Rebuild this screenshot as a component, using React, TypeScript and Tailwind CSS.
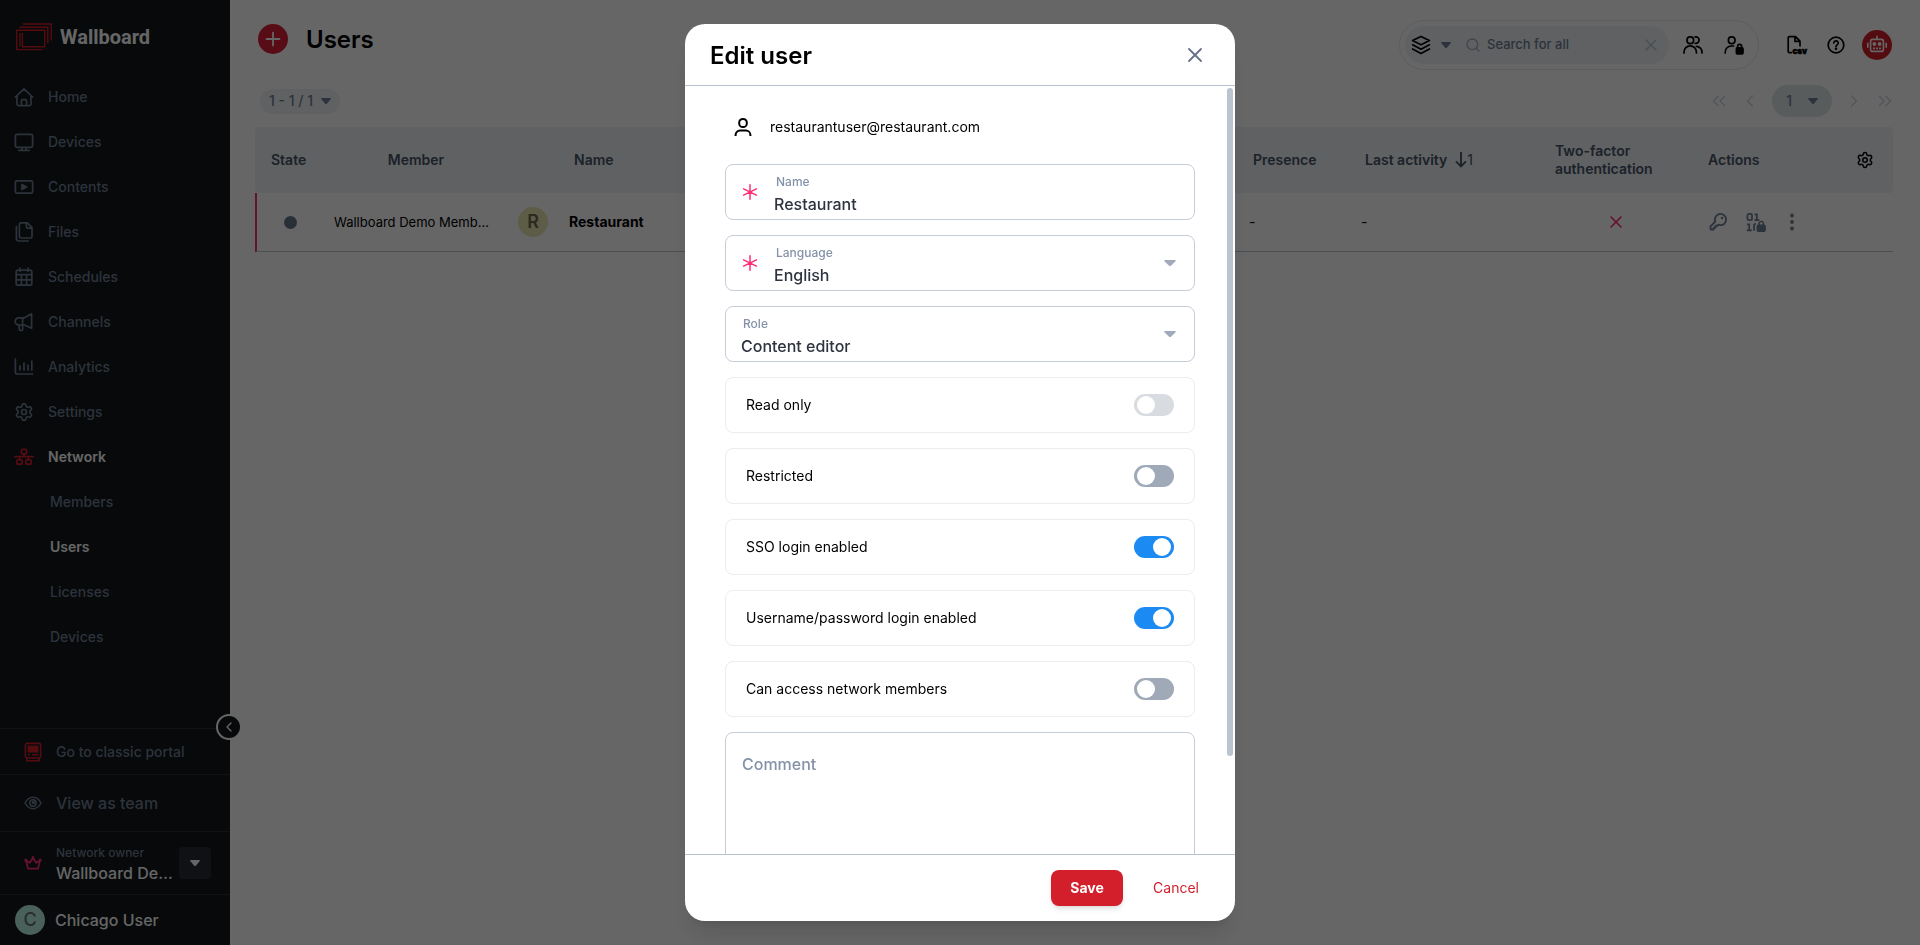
import type { ReactNode } from "react";
import { ChevronLeft, ChevronRight, ChevronsLeft, ChevronsRight, Plus, Search, Settings, X } from "lucide-react";
import { PiKeyBold } from "react-icons/pi";

type IconProps = { className?: string; children?: ReactNode };

const Line = ({ className = "size-5", children }: IconProps) => (
  <svg
    viewBox="0 0 20 20"
    className={`${className} overflow-visible`}
    fill="none"
    stroke="currentColor"
    strokeWidth="1.7"
    strokeLinecap="round"
    strokeLinejoin="round"
    aria-hidden="true"
  >
    {children}
  </svg>
);

const HomeIcon = () => (
  <Line>
    <path d="M1.4 10 10 1.8 18.6 10M3 9v8a1.6 1.6 0 0 0 1.6 1.6h10.8A1.6 1.6 0 0 0 17 17V9M7.4 18.4v-4.2a1.6 1.6 0 0 1 1.6-1.6h2a1.6 1.6 0 0 1 1.6 1.6v4.2" />
  </Line>
);
const DeviceIcon = () => (
  <Line>
    <rect x="1.4" y="2.4" width="17.2" height="13" rx="1.6" />
    <path d="M8 15.6v2.6M12 15.6v2.6M5 18.4h10" />
  </Line>
);
const ContentIcon = () => (
  <Line>
    <rect x="1.4" y="3.8" width="17.2" height="12.4" rx="1.4" />
    <path d="M8 7.4v5.2l4.6-2.6z" fill="currentColor" />
  </Line>
);
const FilesIcon = () => (
  <Line>
    <path d="M7 .9h6.4L18 5.6v8.8a1.6 1.6 0 0 1-1.6 1.6H7a1.6 1.6 0 0 1-1.6-1.6v-12A1.6 1.6 0 0 1 7 .9zM12.4 1.2v3.6a1.4 1.4 0 0 0 1.4 1.4h3.8M2.4 4.4v12.2a2.4 2.4 0 0 0 2.4 2.4h9.4" />
  </Line>
);
const CalendarIcon = () => (
  <Line>
    <rect x="2.2" y="3.2" width="15.6" height="15" rx="1.8" />
    <path d="M2.4 7.6h15.2M6 1.2v3M14 1.2v3M2.4 12.8h15.2M7.4 7.8V18M12.6 7.8V18" />
  </Line>
);
const MegaphoneIcon = () => (
  <Line>
    <path d="M17.6 1.8v14.4L10.4 13H4.6a3.4 3.4 0 0 1-3.4-3.6 3.4 3.4 0 0 1 3.4-3.6h5.8zM8.6 6v6.8M5 13.2l.4 4.4a1 1 0 0 0 1 .9h1.2a1 1 0 0 0 1-1v-4.3" />
  </Line>
);
const ChartIcon = () => (
  <Line>
    <path d="M1.4 2v13.2a1.8 1.8 0 0 0 1.8 1.8h15.4M6 9v4M10 6v7M14 8v5M17.8 4v9" />
  </Line>
);
const NetworkIcon = () => (
  <Line>
    <path d="M.6 9.6h18.8M10 7v2.6M5.6 9.8v2.8M14.4 9.8v2.8" />
    <rect x="7.4" y="2.4" width="5.2" height="4.4" rx="1" />
    <rect x="2.8" y="12.8" width="5.4" height="4.4" rx="1" />
    <rect x="11.8" y="12.8" width="5.4" height="4.4" rx="1" />
  </Line>
);
const UserIcon = () => (
  <svg viewBox="0 0 18 20" className="h-5 w-[18px]" fill="none" stroke="currentColor" strokeWidth="2" aria-hidden="true">
    <rect x="5.2" y="2" width="7.6" height="8" rx="3.6" />
    <path d="M1.6 19v-1a4.4 4.4 0 0 1 4.4-4.4h6a4.4 4.4 0 0 1 4.4 4.4v1" />
  </svg>
);
const UsersIcon = () => (
  <Line>
    <rect x="4" y="1.8" width="6.600" height="6.800" rx="3.2" />
    <path d="M1 18v-1a6.200 6.200 0 0 1 12.400 0v1M12 1.800h.8a3.200 3.200 0 0 1 0 6.600h-.6M13.400 11.400a5.800 5.800 0 0 1 5.600 5.800v.8" />
  </Line>
);
const UserLockIcon = () => (
  <Line>
    <rect x="4.4" y="1.8" width="6.600" height="6.800" rx="3.2" />
    <path d="M1.200 18v-1a6 6 0 0 1 6-6h2.400M13.600 13v-1.600a2 2 0 0 1 4 0V13" />
    <rect x="12.400" y="12.800" width="6.600" height="6" rx="1" fill="currentColor" />
  </Line>
);
const LayersIcon = () => (
  <Line>
    <path d="m10 1.400 8.400 4.200L10 9.800 1.600 5.600zM1.600 9.800l8.400 4.400 8.400-4.400M1.600 14l8.400 4.400 8.400-4.400" />
  </Line>
);
const CsvIcon = () => (
  <Line>
    <path d="M5.400 17.600h-2a1.200 1.200 0 0 1-1.200-1.200V2.800a1.200 1.200 0 0 1 1.200-1.200h6L14 6.200v4.600M9 1.800v4.600h4.800" />
    <text x="6.400" y="18.800" className="text-[8px] font-black" fill="currentColor" strokeWidth="0.600">
      csv
    </text>
  </Line>
);
const HelpIcon = () => (
  <Line>
    <circle cx="10" cy="10" r="7.800" />
    <path d="M7.800 8a2.200 2.200 0 1 1 3.200 2c-.7.400-1 .7-1 1.400" />
    <circle cx="10" cy="13.800" r=".5" fill="currentColor" />
  </Line>
);
const RobotIcon = () => (
  <svg viewBox="0 0 24 24" className="size-6" fill="none" stroke="currentColor" strokeWidth="1.6" aria-hidden="true">
    <rect x="5.600" y="6.400" width="12.800" height="12" rx="2" />
    <path d="M12 6V2.800M2.800 9.800v5M21.200 9.800v5" />
    <path d="M8 15.400h2M11 15.400h2M14 15.400h2" />
    <circle cx="9.400" cy="11" r="1.100" fill="currentColor" />
    <circle cx="14.600" cy="11" r="1.100" fill="currentColor" />
  </svg>
);
const BinaryLockIcon = () => (
  <svg viewBox="0 0 20 20" className="size-5" fill="none" stroke="currentColor" strokeWidth="1.800" aria-hidden="true">
    <rect x="1.400" y="1.900" width="4.600" height="6.200" rx="1.600" />
    <path d="M8.600 2.400h2.200v6M8.400 8.200h5M1 12.400h2.200v6M.8 18.400h5M10 11.800h-.4a1.600 1.600 0 0 0-1.600 1.600v5.400" />
    <rect x="11.400" y="13.400" width="7.600" height="5.600" rx="1" fill="currentColor" />
    <path d="M13 13v-1.400a2.200 2.200 0 0 1 4.400 0V13" strokeWidth="1.500" />
  </svg>
);
const ClassicIcon = () => (
  <svg viewBox="0 0 18 20" className="h-5 w-[18px]" fill="none" stroke="currentColor" strokeWidth="1.600" aria-hidden="true">
    <rect x="1.400" y="1.400" width="15.200" height="14.600" rx="1.600" />
    <rect x="4.400" y="4.400" width="9.200" height="5.400" fill="currentColor" />
    <path d="M4 12.800h2M8 12.800h6.400M2.800 16v2.800h12.400V16" />
  </svg>
);
const EyeIcon = () => (
  <svg viewBox="0 0 18 18" className="size-[18px]" fill="none" stroke="currentColor" strokeWidth="1.500" aria-hidden="true">
    <path d="M1 9c2-3.800 4.800-5.700 8-5.700S15 5.200 17 9c-2 3.800-4.800 5.700-8 5.700S3 12.800 1 9z" />
    <circle cx="9" cy="9" r="3.200" />
    <circle cx="9.400" cy="8.600" r="1" />
  </svg>
);
const CrownIcon = () => (
  <svg viewBox="0 0 18 18" className="size-[18px]" fill="none" stroke="currentColor" strokeWidth="1.800" strokeLinejoin="round" aria-hidden="true">
    <path d="M4 14.600h10l2-8-3.800 2.200L9 4 5.800 8.800 2 6.600z" />
    <circle cx="1.800" cy="6" r=".6" />
    <circle cx="9" cy="3.600" r=".6" />
    <circle cx="16.200" cy="6" r=".6" />
  </svg>
);
const Logo = () => (
  <svg viewBox="0 0 36 28" className="h-7 w-9" fill="none" stroke="currentColor" strokeWidth="1.400" aria-hidden="true">
    <path d="M26.300 26.600H.7V7.200h28v16.600H6.400V10M3.600 4.200h28.200v16M6.800 1h28.400v16.400M4 10v13.600" />
  </svg>
);
const Caret = ({ className = "w-2.5" }: IconProps) => (
  <svg viewBox="0 0 10 6" className={`h-1.5 ${className}`} preserveAspectRatio="none" fill="currentColor" aria-hidden="true">
    <path d="M1 0h8q1.300.3.600 1.300L6 5.400q-1 1-2 0L.4 1.300Q-.3.300 1 0z" />
  </svg>
);
const Asterisk = () => (
  <svg viewBox="0 0 16 16" className="size-4 text-[#ff2e74]" stroke="currentColor" strokeWidth="1.500" strokeLinecap="round" aria-hidden="true">
    <path d="M8 .8v14.400M1.600 4.800l12.800 6.400M14.400 4.800 1.600 11.200" />
  </svg>
);
const SortIcon = () => (
  <svg viewBox="0 0 12 16" className="h-4 w-3" fill="none" stroke="currentColor" strokeWidth="1.900" aria-hidden="true">
    <path d="M6 0v14.400M1 9.400l5 5 5-5" />
  </svg>
);
const DotsIcon = () => (
  <svg viewBox="0 0 4 18" className="h-[18px] w-1" fill="currentColor" aria-hidden="true">
    <circle cx="2" cy="2.500" r="1.900" />
    <circle cx="2" cy="9" r="1.900" />
    <circle cx="2" cy="15.500" r="1.900" />
  </svg>
);

const nav = [
  { label: "Home", icon: <HomeIcon /> },
  { label: "Devices", icon: <DeviceIcon /> },
  { label: "Contents", icon: <ContentIcon /> },
  { label: "Files", icon: <FilesIcon /> },
  { label: "Schedules", icon: <CalendarIcon /> },
  { label: "Channels", icon: <MegaphoneIcon /> },
  { label: "Analytics", icon: <ChartIcon /> },
  { label: "Settings", icon: <Settings className="size-5" /> },
];
const networkNav = ["Members", "Users", "Licenses", "Devices"];

function Sidebar() {
  return (
    <aside className="flex w-[230px] shrink-0 flex-col bg-[#12171a] text-sm font-medium text-[#718096]">
      <div className="flex h-[74px] items-center gap-2 px-4">
        <span className="text-[#d21f2b]"><Logo /></span>
        <span className="font-['Roboto',sans-serif] text-xl leading-6 font-bold text-white">Wallboard</span>
      </div>
      <nav className="flex flex-1 flex-col">
        {nav.map((item) => (
          <a key={item.label} href="#" className="flex h-[45px] items-center gap-3.5 px-3.5">
            {item.icon}
            {item.label}
          </a>
        ))}
        <a href="#" className="flex h-[45px] items-center gap-3.5 px-3.5 font-semibold text-white">
          <span className="text-[#d21f2b]"><NetworkIcon /></span>
          Network
        </a>
        {networkNav.map((label) => (
          <a
            key={label}
            href="#"
            className={label === "Users" ? "flex h-[45px] items-center pl-[50px] font-semibold text-white" : "flex h-[45px] items-center pl-[50px]"}
          >
            {label}
          </a>
        ))}
      </nav>
      <div className="relative">
        <button
          aria-label="Collapse menu"
          className="absolute -top-3.5 -right-3 flex size-[26px] items-center justify-center rounded-full border-2 border-white bg-[#12171a] text-white"
        >
          <ChevronLeft className="size-4" />
        </button>
        <a href="#" className="flex h-[46px] items-center gap-3.5 border-t border-[#282d36] px-6">
          <span className="text-[#d21f2b]"><ClassicIcon /></span>
          Go to classic portal
        </a>
        <a href="#" className="flex h-[57px] items-center gap-3.5 border-t border-[#282d36] px-6 text-base">
          <EyeIcon />
          View as team
        </a>
        <div className="flex h-[63px] items-center border-t border-[#282d36] pr-[19px] pl-6">
          <span className="mr-3.5 text-[#ff2e74]"><CrownIcon /></span>
          <div className="min-w-0 flex-1">
            <p className="text-xs leading-5">Network owner</p>
            <p className="truncate text-base leading-5 text-white">Wallboard Demo</p>
          </div>
          <button aria-label="Switch network" className="ml-1 flex size-8 shrink-0 items-center justify-center rounded bg-[#282b35] text-white">
            <Caret />
          </button>
        </div>
        <div className="flex h-[51px] items-center gap-2.5 border-t border-[#282d36] px-[15px]">
          <span className="flex size-[30px] items-center justify-center rounded-full bg-[#b8f0e2] text-lg text-[#5f7370]">C</span>
          <span className="text-base text-white">Chicago User</span>
        </div>
      </div>
    </aside>
  );
}

function TopBar() {
  return (
    <header className="flex items-start justify-between px-7 pt-5">
      <div className="flex items-center gap-[18px] pt-[3px]">
        <button aria-label="Add user" className="flex size-[30px] items-center justify-center rounded-full bg-[#dc2036] text-white">
          <Plus className="size-[22px]" />
        </button>
        <h1 className="pt-0.5 text-2xl leading-[30px] font-semibold text-black">Users</h1>
      </div>
      <div className="flex items-center text-black">
        <div className="mr-[27px] flex h-[50px] items-center rounded-full border border-[#e2e8f0] pr-3.5 pl-[5px]">
          <div className="mr-3.5 flex h-[38px] w-[264px] items-center rounded-full bg-[#edf2f7] pr-2 pl-1.5 text-[#718096]">
            <button aria-label="Filter" className="flex items-center gap-2.5">
              <span className="text-black"><LayersIcon /></span>
              <Caret />
            </button>
            <Search className="ml-3.5 size-4 shrink-0 text-[#a0aec0]" />
            <input
              aria-label="Search"
              placeholder="Search for all"
              className="ml-1.5 w-full min-w-0 bg-transparent text-[13px] font-medium outline-none placeholder:text-[#718096]"
            />
            <button aria-label="Clear search"><X className="size-5 text-[#b9c4d2]" strokeWidth={1.6} /></button>
          </div>
          <button aria-label="All users" className="mr-[21px]"><UsersIcon /></button>
          <button aria-label="Locked users"><UserLockIcon /></button>
        </div>
        <button aria-label="Export CSV" className="mr-5"><CsvIcon /></button>
        <button aria-label="Help" className="mr-4"><HelpIcon /></button>
        <button aria-label="Assistant" className="flex size-[30px] items-center justify-center rounded-full bg-[#d21f2b] text-white">
          <RobotIcon />
        </button>
      </div>
    </header>
  );
}

function Pager() {
  return (
    <div className="flex h-8 items-center justify-between pr-7 pl-[30px] text-sm font-medium text-[#718096]">
      <button className="flex h-[25px] items-center gap-2 rounded-full bg-[#edf2f7] px-[9px]">
        1 - 1 / 1 <Caret />
      </button>
      <div className="flex items-center text-[#cbd5e0]">
        <button aria-label="First page"><ChevronsLeft className="size-[22px]" strokeWidth={1.6} /></button>
        <button aria-label="Previous page" className="ml-2.5"><ChevronLeft className="size-5" strokeWidth={1.6} /></button>
        <button className="mx-3 flex h-8 items-center gap-4 rounded-full bg-[#dde5e5] px-3.5 text-[#718096]">
          1 <Caret />
        </button>
        <button aria-label="Next page"><ChevronRight className="size-5" strokeWidth={1.6} /></button>
        <button aria-label="Last page" className="-mr-1 ml-2.5"><ChevronsRight className="size-[22px]" strokeWidth={1.6} /></button>
      </div>
    </div>
  );
}

function UserTable() {
  return (
    <div className="mt-2.5 pr-[27px] pl-[25px]">
      <table className="w-full table-fixed border-separate border-spacing-0 text-left text-sm text-black">
        <colgroup>
          <col className="w-[71px]" />
          <col className="w-[178px]" />
          <col />
          <col className="w-[112px]" />
          <col className="w-[186px]" />
          <col className="w-[161px]" />
          <col className="w-[193px]" />
        </colgroup>
        <thead>
          <tr className="h-[66px] leading-[18px] text-[#4a5568] [&>th]:bg-[#edf2f7] [&>th]:font-semibold">
            <th className="rounded-l pl-4">State</th>
            <th className="pl-0.5 text-center">Member</th>
            <th className="pl-[70px]">Name</th>
            <th className="pl-3">Presence</th>
            <th className="pl-3">
              <span className="flex items-center gap-2">
                Last activity
                <span className="flex items-center font-normal"><SortIcon />1</span>
              </span>
            </th>
            <th className="pl-4">Two-factor authentication</th>
            <th className="rounded-r pr-[19px] pl-2">
              <span className="flex items-center justify-between">
                Actions
                <button aria-label="Table settings" className="text-black"><Settings className="size-[18px]" /></button>
              </span>
            </th>
          </tr>
        </thead>
        <tbody>
          <tr className="h-[59px] [&>td]:border-b [&>td]:border-b-[#b8c2cc]">
            <td className="border-l-2 border-l-[#ff2e74]">
              <span className="ml-[27px] block size-[13px] rounded-full bg-[#66758a]" />
            </td>
            <td className="truncate pr-3.5 pl-2 text-[13px]">Wallboard Demo Member</td>
            <td className="pl-3.5">
              <span className="flex items-center gap-[21px] font-bold">
                <span className="flex size-[30px] items-center justify-center rounded-full bg-[#e9e6b0] text-lg font-semibold text-[#6c6a52]">R</span>
                Restaurant
              </span>
            </td>
            <td className="pl-2">-</td>
            <td className="pl-2">-</td>
            <td className="pl-[67px]"><X className="size-5 text-[#ff2e74]" aria-label="Disabled" /></td>
            <td className="pl-2 text-[#718096]">
              <span className="flex items-center gap-[18px]">
                <button aria-label="Change password"><PiKeyBold className="size-5" /></button>
                <button aria-label="Permissions"><BinaryLockIcon /></button>
                <button aria-label="More" className="ml-1.5"><DotsIcon /></button>
              </span>
            </td>
          </tr>
        </tbody>
      </table>
    </div>
  );
}

const fieldBox = "flex h-14 items-center rounded-lg border border-[#c5ccd8]";
const fieldLabel = "pl-0.5 text-xs leading-5 font-medium text-[#8492a8]";
const fieldValue = "h-6 w-full appearance-none bg-transparent text-base leading-6 font-medium text-[#2d333f] outline-none";
const fieldText = "flex min-w-0 flex-1 flex-col pt-1";

function SelectField({ id, label, value, required }: { id: string; label: string; value: string; required?: boolean }) {
  return (
    <div className={`${fieldBox} gap-4 pr-[18px] ${required ? "pl-4" : "pl-[15px]"}`}>
      {required && <Asterisk />}
      <div className={fieldText}>
        <label htmlFor={id} className={fieldLabel}>{label}</label>
        <select id={id} className={fieldValue}><option>{value}</option></select>
      </div>
      <Caret className="w-3 text-[#a0aabb]" />
    </div>
  );
}

const switches = [
  { id: "read-only", label: "Read only", on: false, disabled: true },
  { id: "restricted", label: "Restricted", on: false, disabled: false },
  { id: "sso", label: "SSO login enabled", on: true, disabled: false },
  { id: "password-login", label: "Username/password login enabled", on: true, disabled: false },
  { id: "network-members", label: "Can access network members", on: false, disabled: false },
];

function EditUserDialog() {
  return (
    <div className="fixed inset-0 flex items-center justify-center bg-black/60 p-6">
      <form
        role="dialog"
        aria-labelledby="dialog-title"
        className="flex h-full w-[550px] flex-col overflow-hidden rounded-[20px] bg-white text-sm text-black shadow-xl"
      >
        <div className="flex h-[62px] shrink-0 items-center justify-between border-b border-[#b8c1ce] pr-7 pl-[25px]">
          <h2 id="dialog-title" className="pt-0.5 text-2xl font-semibold">Edit user</h2>
          <button type="button" aria-label="Close"><X className="size-6 text-[#66718a]" strokeWidth={1.8} /></button>
        </div>

        <div className="relative min-h-0 flex-1">
          <div className="flex h-full flex-col gap-[15px] overflow-y-auto px-10 pt-[31px] pb-10 [scrollbar-width:none] *:shrink-0">
            <div className="flex h-8 items-start gap-[18px] pl-[9px] leading-5">
              <UserIcon />
              restaurantuser@restaurant.com
            </div>
            <div className={`${fieldBox} gap-4 px-4`}>
              <Asterisk />
              <div className={fieldText}>
                <label htmlFor="name" className={fieldLabel}>Name</label>
                <input id="name" defaultValue="Restaurant" className={fieldValue} />
              </div>
            </div>
            <SelectField id="language" label="Language" value="English" required />
            <SelectField id="role" label="Role" value="Content editor" />
            {switches.map((s) => (
              <div key={s.id} className="flex h-14 items-center justify-between rounded-lg border border-[#ebedf0] px-5">
                <label htmlFor={s.id}>{s.label}</label>
                <input
                  id={s.id}
                  type="checkbox"
                  role="switch"
                  defaultChecked={s.on}
                  disabled={s.disabled}
                  className="flex h-[22px] w-10 appearance-none items-center rounded-full bg-[#a0a9b8] px-[3px] before:size-[18px] before:rounded-full before:bg-white checked:justify-end checked:bg-[#1c8af3] disabled:bg-[#d8dce1]"
                />
              </div>
            ))}
            <textarea
              aria-label="Comment"
              placeholder="Comment"
              className="h-[200px] resize-none rounded-lg border border-[#c5ccd8] px-4 py-[19px] text-base font-medium outline-none placeholder:text-[#8492a8]"
            />
          </div>
          <div className="absolute top-0.5 right-0.5 h-[87%] w-1.5 rounded-full bg-[#bbc3cf]" />
        </div>

        <div className="flex h-[67px] shrink-0 items-center justify-end border-t border-[#b8c1ce] pr-[22px]">
          <button type="submit" className="h-9 w-[72px] rounded-lg bg-[#d21f2b] font-bold text-white shadow-md">Save</button>
          <button type="button" className="ml-4 h-9 px-3.5 text-[#d21f2b]">Cancel</button>
        </div>
      </form>
    </div>
  );
}

export default function App() {
  return (
    <div className="flex h-screen min-h-[760px] bg-white font-['Inter',sans-serif]">
      <Sidebar />
      <main className="flex min-w-0 flex-1 flex-col">
        <TopBar />
        <div className="mt-[15px]"><Pager /></div>
        <UserTable />
      </main>
      <EditUserDialog />
    </div>
  );
}
